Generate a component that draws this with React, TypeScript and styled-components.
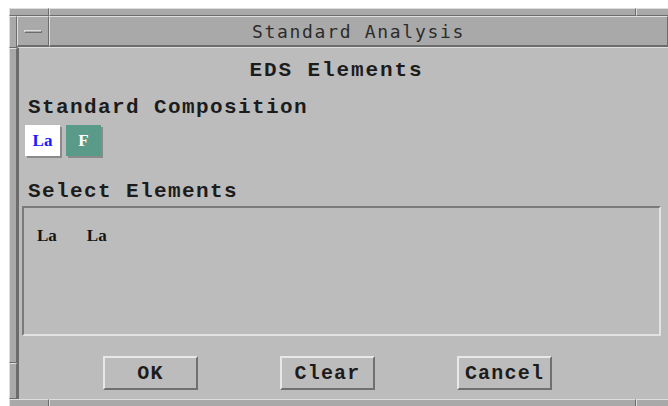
import React from 'react'
import styled, { createGlobalStyle } from 'styled-components'

const GlobalStyle = createGlobalStyle`
  html, body {
    margin: 0;
    padding: 0;
    background: #ffffff;
    overflow: hidden;
  }
`

const FRAME = '#a9a9a9'
const FACE = '#bcbcbc'
const LIGHT = '#dedede'
const DARK = '#6c6c6c'

const Page = styled.div`
  padding: 8px 0 0 9px;
  width: 676px;
`

const Window = styled.div`
  display: flex;
  flex-direction: column;
  width: 667px;
  background: ${FRAME};
`

const EdgeRow = styled.div`
  display: flex;
  height: 8px;
`

const EdgeH = styled.div<{ $w?: number }>`
  ${({ $w }) => ($w ? `width: ${$w}px;` : 'flex: 1;')}
  box-sizing: border-box;
  border-top: 1px solid ${LIGHT};
  border-left: 1px solid ${LIGHT};
  border-bottom: 1px solid ${DARK};
  border-right: 1px solid ${DARK};
`

const Middle = styled.div`
  display: flex;
`

const Side = styled.div`
  display: flex;
  flex-direction: column;
  width: 8px;
`

const EdgeV = styled.div<{ $h?: number }>`
  ${({ $h }) => ($h ? `height: ${$h}px;` : 'flex: 1;')}
  box-sizing: border-box;
  border-top: 1px solid ${LIGHT};
  border-left: 1px solid ${LIGHT};
  border-bottom: 1px solid ${DARK};
  border-right: 1px solid ${DARK};
`

const Inner = styled.div`
  flex: 1;
  display: flex;
  flex-direction: column;
`

const TitleBar = styled.div`
  display: flex;
  height: 31px;
`

const MenuButton = styled.div`
  width: 32px;
  box-sizing: border-box;
  display: flex;
  align-items: center;
  justify-content: center;
  border-top: 1px solid ${LIGHT};
  border-left: 1px solid ${LIGHT};
  border-bottom: 2px solid ${DARK};
  border-right: 1px solid ${DARK};
`

const MenuBar = styled.div`
  width: 18px;
  height: 3px;
  box-sizing: border-box;
  border-top: 1px solid ${LIGHT};
  border-left: 1px solid ${LIGHT};
  border-bottom: 1px solid ${DARK};
  border-right: 1px solid ${DARK};
`

const TitleText = styled.div`
  flex: 1;
  box-sizing: border-box;
  display: flex;
  align-items: center;
  justify-content: center;
  border-top: 1px solid ${LIGHT};
  border-left: 1px solid ${LIGHT};
  border-bottom: 2px solid ${DARK};
  border-right: 1px solid ${DARK};
  font-family: 'DejaVu Sans Mono', monospace;
  font-size: 18px;
  letter-spacing: 1.7px;
  color: #2c2c2c;
`

const Content = styled.div`
  background: ${FACE};
  border-top: 1px solid ${LIGHT};
  border-left: 2px solid ${DARK};
  display: flex;
  flex-direction: column;
  padding: 0 7px 0 1px;
  height: 352px;
  box-sizing: border-box;
  font-family: 'Liberation Mono', 'Courier New', monospace;
  font-weight: bold;
  font-size: 21px;
  letter-spacing: 1.4px;
  color: #1c1c1c;
`

const Heading = styled.div`
  text-align: center;
  margin-top: 11px;
  line-height: 24px;
  padding-right: 8px;
  letter-spacing: 1.9px;
`

const Label = styled.div<{ $top: number }>`
  margin: ${({ $top }) => $top}px 0 0 8px;
  line-height: 24px;
`

const ChipRow = styled.div`
  display: flex;
  gap: 6px;
  margin: 5px 0 0 5px;
`

const Chip = styled.div<{ $bg: string; $fg: string }>`
  width: 35px;
  height: 31px;
  display: flex;
  align-items: center;
  justify-content: center;
  background: ${({ $bg }) => $bg};
  color: ${({ $fg }) => $fg};
  box-shadow: 2px 2px 0 #8a8a8a;
  font-family: 'Liberation Serif', 'Times New Roman', serif;
  font-weight: bold;
  font-size: 17px;
  letter-spacing: 0;
`

const ListBox = styled.div`
  margin: 2px 0 0 2px;
  height: 130px;
  box-sizing: border-box;
  border-top: 2px solid #7a7a7a;
  border-left: 2px solid #7a7a7a;
  border-bottom: 2px solid #e2e2e2;
  border-right: 2px solid #e2e2e2;
  display: flex;
  gap: 30px;
  align-items: flex-start;
  padding: 18px 0 0 13px;
`

const ListItem = styled.span`
  font-family: 'Liberation Serif', 'Times New Roman', serif;
  font-weight: bold;
  font-size: 17px;
  letter-spacing: 0;
  color: #141414;
`

const ButtonRow = styled.div`
  display: flex;
  gap: 82px;
  padding: 20px 0 0 83px;
`

const PushButton = styled.div`
  width: 95px;
  height: 34px;
  box-sizing: border-box;
  display: flex;
  align-items: center;
  justify-content: center;
  border-top: 2px solid #e8e8e8;
  border-left: 2px solid #e8e8e8;
  border-bottom: 2px solid #707070;
  border-right: 2px solid #707070;
  font-size: 20px;
  letter-spacing: 1.2px;
`

const App = () => {
  return (
    <Page>
      <GlobalStyle />
      <Window>
        <EdgeRow>
          <EdgeH $w={40} />
          <EdgeH />
          <EdgeH $w={40} />
        </EdgeRow>
        <Middle>
          <Side>
            <EdgeV $h={32} />
            <EdgeV />
            <EdgeV $h={36} />
          </Side>
          <Inner>
            <TitleBar>
              <MenuButton>
                <MenuBar />
              </MenuButton>
              <TitleText>Standard Analysis</TitleText>
            </TitleBar>
            <Content>
              <Heading>EDS Elements</Heading>
              <Label $top={13}>Standard Composition</Label>
              <ChipRow>
                <Chip $bg="#ffffff" $fg="#1a1aff">La</Chip>
                <Chip $bg="#5a9a88" $fg="#ffffff">F</Chip>
              </ChipRow>
              <Label $top={24}>Select Elements</Label>
              <ListBox>
                <ListItem>La</ListItem>
                <ListItem>La</ListItem>
              </ListBox>
              <ButtonRow>
                <PushButton>OK</PushButton>
                <PushButton>Clear</PushButton>
                <PushButton>Cancel</PushButton>
              </ButtonRow>
            </Content>
          </Inner>
          <Side>
            <EdgeV $h={32} />
            <EdgeV />
            <EdgeV $h={36} />
          </Side>
        </Middle>
        <EdgeRow>
          <EdgeH $w={40} />
          <EdgeH />
          <EdgeH $w={40} />
        </EdgeRow>
      </Window>
    </Page>
  )
}

export default App
